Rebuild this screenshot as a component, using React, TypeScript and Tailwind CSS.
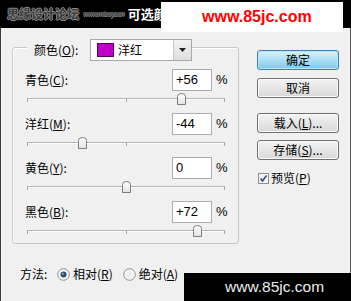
import React from "react";

function Slider({ value }: { value: number }) {
  const x = 99 + (value / 100) * 99;
  return (
    <div className="relative h-[22px] ml-[14px] w-[198px]">
      <div className="absolute left-0 right-0 top-[7px] h-[2px] border-t border-t-[#b4b4b4] border-b border-b-white" />
      <div className="absolute left-0 top-[7px] w-[1px] h-[4px] bg-[#a8a8a8]" />
      <div className="absolute left-[99px] top-[7px] w-[1px] h-[4px] bg-[#a8a8a8]" />
      <div className="absolute right-0 top-[7px] w-[1px] h-[4px] bg-[#a8a8a8]" />
      <svg
        className="absolute top-[2px]"
        style={{ left: x - 4.5 }}
        width="9"
        height="12"
        viewBox="0 0 9 12"
      >
        <defs>
          <linearGradient id="thumbg" x1="0" y1="0" x2="0" y2="1">
            <stop offset="0" stopColor="#ffffff" />
            <stop offset="1" stopColor="#e2e2e2" />
          </linearGradient>
        </defs>
        <path
          d="M0.5 11.5 V3.5 Q0.5 0.5 4.5 0.5 Q8.5 0.5 8.5 3.5 V11.5 Z"
          fill="url(#thumbg)"
          stroke="#7d7d7d"
        />
      </svg>
    </div>
  );
}

function Row({ label, k, value }: { label: string; k: string; value: string }) {
  return (
    <div className="flex items-center h-[22px]">
      <div className="w-[159px] pl-[12px] text-[12px] text-black">
        {label}(<span className="underline">{k}</span>):
      </div>
      <div className="w-[40px] h-[22px] border border-[#abadb3] bg-white flex items-center pl-[3px] text-[13px] text-black font-['Liberation_Sans',sans-serif]">
        {value}
      </div>
      <div className="ml-[4px] text-[13px] text-black font-['Liberation_Sans',sans-serif]">%</div>
    </div>
  );
}

function Btn({ children, primary }: { children: React.ReactNode; primary?: boolean }) {
  return (
    <div
      className={
        primary
          ? "w-[82px] h-[20px] rounded-[3px] border border-[#3c7fb1] bg-gradient-to-b from-[#d9f1fb] to-[#7ccbeb] flex items-center justify-center text-[12px] text-black shadow-[inset_0_0_0_1px_#b8e6f8]"
          : "w-[82px] h-[20px] rounded-[3px] border border-[#707070] bg-gradient-to-b from-[#f4f4f4] to-[#d8d8d8] flex items-center justify-center text-[12px] text-black shadow-[inset_0_0_0_1px_#fafafa]"
      }
    >
      {children}
    </div>
  );
}

function Radio({ checked }: { checked?: boolean }) {
  return (
    <svg width="13" height="13" viewBox="0 0 13 13">
      <defs>
        <radialGradient id={checked ? "rg1" : "rg2"} cx="0.5" cy="0.5" r="0.5">
          <stop offset="0" stopColor="#e8e8e8" />
          <stop offset="1" stopColor="#f8f8f8" />
        </radialGradient>
      </defs>
      <circle cx="6.5" cy="6.5" r="5.8" fill={`url(#${checked ? "rg1" : "rg2"})`} stroke="#8e8f8f" />
      {checked && <circle cx="6.5" cy="6.5" r="3" fill="#2e4f70" />}
      {checked && <circle cx="5.8" cy="5.8" r="1.1" fill="#7fa7cc" />}
    </svg>
  );
}

export default function App() {
  return (
    <div className="w-[351px] h-[301px] relative overflow-hidden bg-[#f0f0f0] font-['Noto_Sans_CJK_SC','Noto_Sans',sans-serif]">
      {/* title bar */}
      <div className="h-[28px] bg-black flex items-center pl-[7px]">
        <span className="text-[12px] font-bold text-[#3a3a3a] [text-shadow:1px_0_#8a8a8a,-1px_0_#8a8a8a,0_1px_#8a8a8a,0_-1px_#8a8a8a]">
          思缘设计论坛
        </span>
        <span className="ml-[4px] text-[6.5px] leading-[8px] font-bold text-[#444] tracking-[-0.5px] [text-shadow:1px_0_#8a8a8a,0_1px_#8a8a8a] whitespace-nowrap font-['Liberation_Sans',sans-serif]">
          www.missyuan
        </span>
        <span className="ml-[4px] text-[13px] font-bold text-white whitespace-nowrap">可选颜</span>
      </div>

      {/* body */}
      <div className="flex h-[273px] border-l border-l-[#3c3c3c] border-r border-r-[#5a5a5a]">
        {/* left */}
        <div className="w-[243px] pl-[11px]">
          <div className="mt-[19px] w-[227px] h-[197px] border border-[#c9c9c9] rounded-[3px] shadow-[inset_1px_1px_0_#ffffff]">
            {/* header */}
            <div className="-mt-[9px] ml-[14px] flex items-center w-fit bg-[#f0f0f0] pl-[7px]">
              <div className="w-[56px] text-[12px] text-black">
                颜色(<span className="underline">O</span>):
              </div>
              <div className="w-[102px] h-[22px] border border-[#a9a9a9] bg-white flex items-center">
                <div className="ml-[6px] w-[17px] h-[14px] border border-[#5a005a] bg-[#c000c8]" />
                <div className="ml-[4px] text-[12px] text-black">洋红</div>
                <div className="ml-auto w-[18px] h-full border-l border-[#c8c8c8] bg-gradient-to-b from-[#f2f2f2] to-[#dedede] flex items-center justify-center">
                  <svg width="7" height="4" viewBox="0 0 7 4">
                    <path d="M0 0 H7 L3.5 4 Z" fill="#222" />
                  </svg>
                </div>
              </div>
            </div>

            <div className="mt-[8px]">
              <Row label="青色" k="C" value="+56" />
              <Slider value={56} />
              <Row label="洋红" k="M" value="-44" />
              <Slider value={-44} />
              <Row label="黄色" k="Y" value="0" />
              <Slider value={0} />
              <Row label="黑色" k="B" value="+72" />
              <Slider value={72} />
            </div>
          </div>

          {/* method */}
          <div className="mt-[22px] ml-[8px] flex items-center h-[16px] text-[12px] text-black">
            <span className="w-[30px]">方法:</span>
            <span className="ml-[7px] flex items-center">
              <Radio checked />
            </span>
            <span className="ml-[3px]">
              相对(<span className="underline">R</span>)
            </span>
            <span className="ml-[10px] flex items-center">
              <Radio />
            </span>
            <span className="ml-[3px]">
              绝对(<span className="underline">A</span>)
            </span>
          </div>
        </div>

        {/* right */}
        <div className="pl-[13px] pt-[22px] flex flex-col">
          <Btn primary>确定</Btn>
          <div className="mt-[8px]">
            <Btn>取消</Btn>
          </div>
          <div className="mt-[15px]">
            <Btn>
              载入(<span className="underline">L</span>)...
            </Btn>
          </div>
          <div className="mt-[7px]">
            <Btn>
              存储(<span className="underline">S</span>)...
            </Btn>
          </div>
          <div className="mt-[12px] ml-[1px] flex items-center h-[12px] text-[12px] text-black">
            <svg width="11" height="11" viewBox="0 0 11 11">
              <rect x="0.5" y="0.5" width="10" height="10" fill="#f4f4f4" stroke="#8e8f8f" />
              <path d="M2.5 5.5 L4.5 8 L8.5 2.5" fill="none" stroke="#2c4c74" strokeWidth="1.6" />
            </svg>
            <span className="ml-[2px]">
              预览(<span className="underline">P</span>)
            </span>
          </div>
        </div>
      </div>

      {/* top watermark */}
      <div className="absolute left-[161px] top-[2px] w-[182px] h-[30px] bg-white flex items-center pl-[41px]">
        <span className="text-[16px] font-bold text-[#ff0000] font-['Liberation_Sans',sans-serif]">www.85jc.com</span>
      </div>

      {/* bottom watermark */}
      <div className="absolute left-[184px] top-[273px] right-0 bottom-0 bg-black flex items-center pl-[41px]">
        <span className="text-[15.5px] text-[#ececec] font-['Liberation_Sans',sans-serif]">www.85jc.com</span>
      </div>
    </div>
  );
}
